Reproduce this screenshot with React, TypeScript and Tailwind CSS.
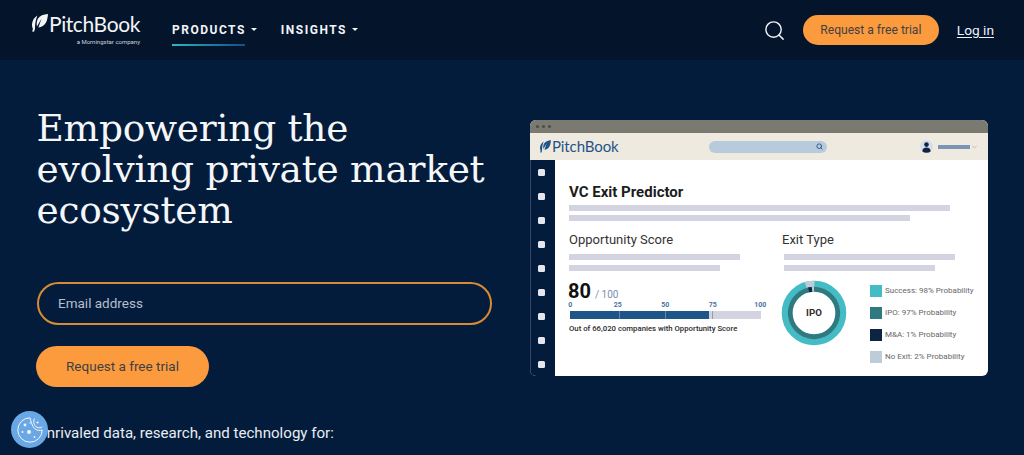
import React from 'react';
import { Search } from 'lucide-react';

const roboto = "font-['Roboto',sans-serif]";

function Leaf({ className, fill }: { className: string; fill: string }) {
    return (
        <svg viewBox="0 0 16 18" className={className} fill={fill}>
            <path d="M16 0C11.5 0.3 7.8 1.8 6 4.6C4.6 7 4.4 10 5 12.6L9.6 4.6L6.4 13.6C9.6 13.4 12.4 11.6 14 8.6C15.2 6.2 15.8 3 16 0Z" />
            <path d="M5.4 1.6C2.2 3.4 0.2 7 0 10.6C-0.1 12.2 0.3 13.6 0.9 14.8L0.2 17.6L2 17.8L3 14.8C3 10.4 3.6 5.6 5.4 1.6Z" />
        </svg>
    );
}

function Caret() {
    return <span className="ml-[5px] mb-[1px] w-0 h-0 border-x-[3.5px] border-x-transparent border-t-[3.5px] border-t-[#f2f5f8]" />;
}

function Header() {
    return (
        <header className={`h-[60px] bg-[#03142b] flex items-center pl-[32px] pr-[30px] ${roboto}`}>
            <div className="w-[108px] h-[36px] flex flex-col shrink-0">
                <div className="flex items-center h-[24px]">
                    <Leaf className="w-[16px] h-[18px] mr-[1px] mb-[2px] shrink-0" fill="#f4f5f6" />
                    <span className="font-['Lato',sans-serif] text-[21px] leading-[24px] text-[#f4f5f6] tracking-[-0.4px]">PitchBook</span>
                </div>
                <div className="text-right whitespace-nowrap text-[6px] leading-[10px] mt-[1px] text-[#cdd3dc]">a Morningstar company</div>
            </div>
            <nav className="flex ml-[32px] h-[60px] items-start pt-[21px] text-[12px] font-bold tracking-[1.5px] text-[#f2f5f8] leading-[18px]">
                <div className="relative flex items-center">
                    PRODUCTS
                    <Caret />
                    <span className="absolute left-0 top-[23px] w-[73px] h-[2px] bg-gradient-to-r from-[#2fb5bf] to-[#154f88]" />
                </div>
                <div className="flex items-center ml-[24px]">
                    INSIGHTS
                    <Caret />
                </div>
            </nav>
            <div className="ml-auto flex items-center">
                <Search className="w-[23px] h-[23px] text-[#eef1f4] mr-[17px]" strokeWidth={1.5} />
                <button className="w-[136px] h-[30px] rounded-full bg-[#fb9b3d] text-[12.1px] text-[#3f3f46]">Request a free trial</button>
                <a className="ml-[18px] text-[13.7px] text-[#eaf2fb] underline underline-offset-2">Log in</a>
            </div>
        </header>
    );
}

function Bar({ className }: { className: string }) {
    return <div className={`h-[6px] bg-[#d3d3e1] ${className}`} />;
}

function Donut() {
    return (
        <svg viewBox="0 0 68 68" className="w-[66px] h-[66px] shrink-0 -ml-[1px]">
            <circle cx="34" cy="34" r="30" fill="none" stroke="#43bcc6" strokeWidth="6.5" />
            <path d="M25.5 5.2A30 30 0 0 1 34.5 4" fill="none" stroke="#bdccd9" strokeWidth="6.5" />
            <circle cx="34" cy="34" r="24.5" fill="none" stroke="#2f7a80" strokeWidth="5" />
            <path d="M28.5 10.1A24.5 24.5 0 0 1 32 9.6" fill="none" stroke="#0e2445" strokeWidth="5" />
            <path d="M32 9.6A24.5 24.5 0 0 1 34 9.5" fill="none" stroke="#bdccd9" strokeWidth="5" />
            <text x="34" y="37.5" textAnchor="middle" fontFamily="Roboto, sans-serif" fontWeight="700" fontSize="10" fill="#2b2b2b">IPO</text>
        </svg>
    );
}

const legend = [
    { label: 'Success: 98% Probability', color: 'bg-[#43bcc6]' },
    { label: 'IPO: 97% Probability', color: 'bg-[#2f7a80]' },
    { label: 'M&A: 1% Probability', color: 'bg-[#0e2445]' },
    { label: 'No Exit: 2% Probability', color: 'bg-[#bdccd9]' },
];

function MockWindow() {
    return (
        <div className={`w-[458px] h-[256px] rounded-[6px] overflow-hidden flex flex-col bg-white ${roboto}`}>
            <div className="h-[13px] bg-[#7b7a70] flex items-center pl-[6px] gap-[3px]">
                <span className="w-[3px] h-[3px] rounded-full bg-[#4d4d48]" />
                <span className="w-[3px] h-[3px] rounded-full bg-[#4d4d48]" />
                <span className="w-[3px] h-[3px] rounded-full bg-[#4d4d48]" />
            </div>
            <div className="h-[27px] bg-[#efeadf] flex items-center pl-[10px] pr-[11px]">
                <Leaf className="w-[11px] h-[13px] mr-[1px] shrink-0" fill="#1f5488" />
                <span className="font-['Lato',sans-serif] text-[15px] text-[#1f5488] tracking-[-0.1px] w-[157px] shrink-0">PitchBook</span>
                <div className="w-[118px] h-[12px] rounded-full bg-[#b8cbdc] flex items-center justify-end pr-[4px]">
                    <Search className="w-[7px] h-[7px] text-[#1f5488]" strokeWidth={3} />
                </div>
                <div className="ml-auto flex items-center">
                    <svg viewBox="0 0 13 13" className="w-[13px] h-[13px]">
                        <circle cx="6.5" cy="6.5" r="6.5" fill="#d5dde8" />
                        <circle cx="6.5" cy="4.6" r="2.3" fill="#0e2445" />
                        <path d="M2.2 11.2C2.6 8.6 4.5 7.6 6.5 7.6S10.4 8.6 10.8 11.2A6.5 6.5 0 0 1 2.2 11.2Z" fill="#0e2445" />
                    </svg>
                    <span className="ml-[5px] w-[32px] h-[4px] bg-[#7d95b5]" />
                    <svg viewBox="0 0 6 4" className="ml-[2px] w-[5px] h-[4px]" fill="none" stroke="#9aa8ba" strokeWidth="0.8">
                        <path d="M0.5 0.8L3 3L5.5 0.8" />
                    </svg>
                </div>
            </div>
            <div className="flex flex-1 min-h-0">
                <div className="w-[25px] shrink-0 bg-[#031c3c] flex flex-col items-center pt-[9px] gap-[17px] pr-[3px] border-l border-l-[#31476a]">
                    {[0, 1, 2, 3, 4, 5, 6, 7, 8].map((i) => (
                        <span key={i} className="w-[7px] h-[7px] rounded-[1.5px] bg-[#e6e7ee]" />
                    ))}
                </div>
                <div className="flex-1 min-w-0 pl-[14px] pr-[15px] pt-[23px]">
                    <div className="text-[15px] leading-[18px] font-bold text-[#1c1c1c]">VC Exit Predictor</div>
                    <Bar className="w-[381px] mt-[4px]" />
                    <Bar className="w-[341px] mt-[4px]" />
                    <div className="flex mt-[11px]">
                        <div className="w-[213px] shrink-0">
                            <div className="text-[13px] leading-[16px] text-[#333]">Opportunity Score</div>
                            <Bar className="w-[171px] h-[5px] mt-[6px]" />
                            <Bar className="w-[151px] h-[5px] mt-[5px]" />
                            <div className="flex items-baseline mt-[8px] -ml-[1px] h-[24px]">
                                <span className="text-[20px] leading-[24px] font-bold text-[#111]">80</span>
                                <span className="ml-[4px] text-[10px] text-[#7a8fb0]">/ 100</span>
                            </div>
                            <div className="flex -ml-[22.5px] text-[7px] leading-[8px] font-bold text-[#4a73a0] -mt-[2px]">
                                {[0, 25, 50, 75, 100].map((tick) => (
                                    <span key={tick} className="w-[47.5px] text-center shrink-0">{tick}</span>
                                ))}
                            </div>
                            <div className="relative ml-[1px] w-[191px] h-[8px] mt-[2px] bg-[#d3d3e1]">
                                <div className="w-[139px] h-[8px] bg-[#1f5488]" />
                                <span className="absolute left-[49px] top-0 w-px h-[8px] bg-[#5f86ad]" />
                                <span className="absolute left-[95px] top-0 w-px h-[8px] bg-[#5f86ad]" />
                                <span className="absolute left-[142px] top-0 w-px h-[8px] bg-[#9a9aae]" />
                            </div>
                            <div className="mt-[3px] text-[7.75px] leading-[14px] font-medium text-[#2b2b2b] whitespace-nowrap">Out of 66,020 companies with Opportunity Score</div>
                        </div>
                        <div className="flex-1 min-w-0">
                            <div className="text-[13px] leading-[16px] text-[#333]">Exit Type</div>
                            <Bar className="w-[171px] h-[5px] mt-[6px] ml-[2px]" />
                            <Bar className="w-[151px] h-[5px] mt-[5px] ml-[2px]" />
                            <div className="flex items-start mt-[9px]">
                                <Donut />
                                <div className="ml-[23px] flex flex-col gap-[10px] pt-[5px]">
                                    {legend.map((item) => (
                                        <div key={item.label} className="flex items-center h-[12px]">
                                            <span className={`w-[12px] h-[12px] ${item.color}`} />
                                            <span className="ml-[3px] text-[8px] leading-[12px] text-[#666] whitespace-nowrap">{item.label}</span>
                                        </div>
                                    ))}
                                </div>
                            </div>
                        </div>
                    </div>
                </div>
            </div>
        </div>
    );
}

function CookieBadge() {
    return (
        <div className="absolute left-[11px] top-[411px] w-[37px] h-[37px] rounded-full bg-[#69a8e4] flex items-center justify-center">
            <svg viewBox="0 0 26 26" className="w-[26px] h-[26px]" fill="none" stroke="#f2f6fb" strokeWidth="1">
                <path d="M13 0.8A12.2 12.2 0 1 0 25.2 13C22.5 13.8 19.5 13.4 17.5 11.5C15.2 9.5 14 4.5 13 0.8Z" />
                <path d="M17.5 1.5C15.8 4.5 17 9 20 10.3C22 11.2 24.2 10.8 25.3 9.8" />
                <circle cx="20.5" cy="5.5" r="1.1" fill="#f2f6fb" stroke="none" />
                <circle cx="8" cy="8" r="1.4" fill="#f2f6fb" stroke="none" />
                <circle cx="5.5" cy="15" r="1" fill="#f2f6fb" stroke="none" />
                <circle cx="12" cy="15" r="2" fill="#f2f6fb" stroke="none" />
                <circle cx="13" cy="6" r="0.7" fill="#f2f6fb" stroke="none" />
                <circle cx="17.5" cy="20" r="0.9" fill="#f2f6fb" stroke="none" />
            </svg>
        </div>
    );
}

export default function App() {
    return (
        <div className="relative w-[1024px] h-[455px] overflow-hidden bg-[#031c3c]">
            <Header />
            <main className="flex pl-[36px] pt-[45px]">
                <div className={`w-[494px] shrink-0 ${roboto}`}>
                    <h1 className="font-['DejaVu_Serif',serif] text-[37.5px] leading-[41px] text-[#f5f6f8] tracking-[-0.25px] whitespace-nowrap pl-[0.5px] pt-[3px]">
                        Empowering the
                        <br />
                        evolving private market
                        <br />
                        ecosystem
                    </h1>
                    <div className="mt-[51px] ml-[1px] w-[455px] h-[43px] rounded-full border-2 border-[#d98a35] flex items-center pl-[19px] text-[13.5px] text-[#b4bfcd]">
                        Email address
                    </div>
                    <button className="mt-[21px] w-[173px] h-[41px] rounded-full bg-[#fb9b3d] text-[13.5px] text-[#3f3f46]">Request a free trial</button>
                    <p className="mt-[36px] ml-[1px] text-[15.1px] leading-[20px] text-[#e8edf3]">Unrivaled data, research, and technology for:</p>
                </div>
                <div className="pt-[15px]">
                    <MockWindow />
                </div>
            </main>
            <CookieBadge />
        </div>
    );
}
